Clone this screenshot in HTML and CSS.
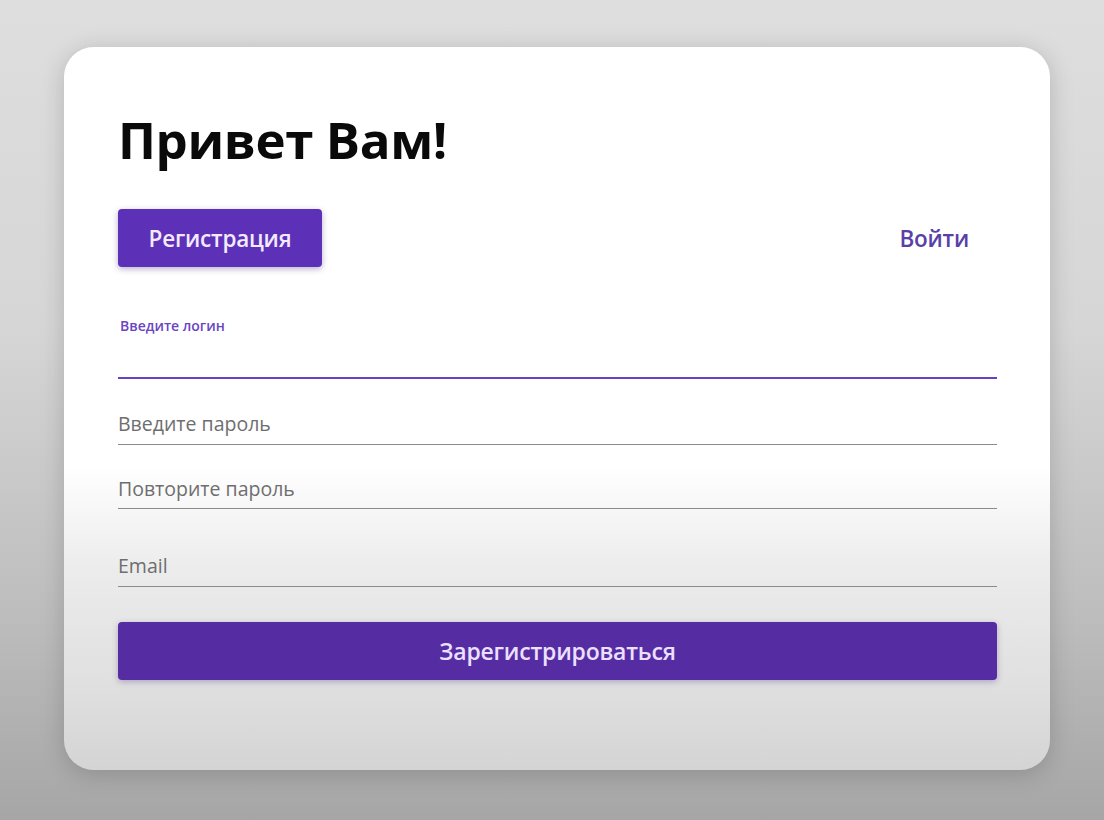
FILE: index.html
```html
<!DOCTYPE html>
<html lang="ru">
<head>
<meta charset="utf-8">
<title>Регистрация</title>
<link rel="stylesheet" href="styles.css">
</head>
<body>
<main class="card">
  <h1 class="title">Привет Вам!</h1>
  <div class="tabs">
    <button class="tab tab-active">Регистрация</button>
    <button class="tab tab-link">Войти</button>
  </div>
  <form class="form">
    <label class="field field-focused">
      <span class="float-label">Введите логин</span>
    </label>
    <label class="field field-pass">
      <span class="placeholder">Введите пароль</span>
    </label>
    <label class="field field-repeat">
      <span class="placeholder">Повторите пароль</span>
    </label>
    <label class="field field-email">
      <span class="placeholder">Email</span>
    </label>
    <button type="button" class="submit">Зарегистрироваться</button>
  </form>
</main>
</body>
</html>
```

FILE: styles.css
```css
html, body {
  margin: 0;
  height: 100%;
}
body {
  background: linear-gradient(180deg, #dedede 0%, #d6d6d6 40%, #bdbdbd 75%, #a6a6a6 100%);
  font-family: "Open Sans", "Noto Sans", sans-serif;
  padding: 47px 54px 0 64px;
  box-sizing: border-box;
  overflow: hidden;
}
.card {
  width: 986px;
  height: 723px;
  box-sizing: border-box;
  border-radius: 30px;
  background: linear-gradient(180deg, #ffffff 0%, #ffffff 58%, #ececec 72%, #e0e0e0 88%, #d4d4d4 100%);
  box-shadow: 0 4px 24px rgba(0, 0, 0, 0.18);
  padding: 58px 53px 0 54px;
}
.title {
  margin: 0;
  font-size: 51px;
  line-height: 68px;
  font-weight: 700;
  color: #0a0a0a;
  letter-spacing: -0.4px;
}
.tabs {
  display: flex;
  justify-content: space-between;
  align-items: center;
  margin-top: 36px;
}
.tab {
  font-family: inherit;
  font-size: 22.5px;
  font-weight: 600;
  border: none;
  cursor: pointer;
  letter-spacing: -0.2px;
}
.tab-active {
  width: 204px;
  height: 58px;
  border-radius: 4px;
  background: #5d30b8;
  color: #f3eaff;
  box-shadow: 0 2px 6px rgba(60, 30, 120, 0.35);
}
.tab-link {
  background: transparent;
  color: #5a3fa8;
  padding: 0 28px 0 0;
  height: 58px;
}
.form {
  display: flex;
  flex-direction: column;
  margin-top: 49px;
}
.field {
  display: flex;
  flex-direction: column;
  border-bottom: 1.5px solid #8a8a8a;
  padding-bottom: 5px;
}
.field-focused {
  height: 61px;
  border-bottom: 2px solid #6a3fc8;
  padding-bottom: 0;
}
.float-label {
  font-size: 14px;
  color: #6a44c4;
  font-weight: 600;
  line-height: 20px;
  padding-left: 2px;
}
.placeholder {
  font-size: 19.5px;
  color: #6e6e6e;
  line-height: 26px;
}
.field-pass {
  margin-top: 32px;
  padding-bottom: 7px;
}
.field-repeat {
  margin-top: 30.5px;
  padding-bottom: 6px;
}
.field-email {
  margin-top: 44.5px;
  padding-bottom: 7px;
}
.submit {
  margin-top: 34.5px;
  height: 58px;
  border: none;
  border-radius: 4px;
  background: #552ca2;
  color: #ebe0ff;
  font-family: inherit;
  font-size: 23px;
  font-weight: 600;
  letter-spacing: -0.2px;
  box-shadow: 0 2px 6px rgba(60, 30, 120, 0.3);
}
```
